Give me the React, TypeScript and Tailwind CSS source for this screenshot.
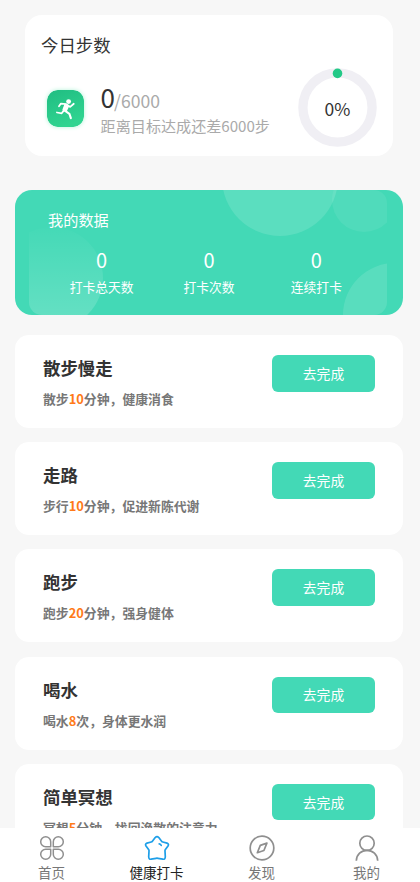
import React from "react";

const tasks = [
  { title: "散步慢走", before: "散步", n: "10", after: "分钟，健康消食" },
  { title: "走路", before: "步行", n: "10", after: "分钟，促进新陈代谢" },
  { title: "跑步", before: "跑步", n: "20", after: "分钟，强身健体" },
  { title: "喝水", before: "喝水", n: "8", after: "次，身体更水润" },
  { title: "简单冥想", before: "冥想", n: "5", after: "分钟，找回涣散的注意力" },
];

const stats = ["打卡总天数", "打卡次数", "连续打卡"];

function Runner() {
  return (
    <svg viewBox="0 0 38 38" className="h-[37px] w-[37px] shrink-0 rounded-[11px] shadow-[0_0_4px_#b4f3d8]">
      <defs>
        <linearGradient id="runner" x1="0" y1="0" x2="0.4" y2="1">
          <stop offset="0" stopColor="#20bd82" />
          <stop offset="1" stopColor="#30d490" />
        </linearGradient>
      </defs>
      <rect width="38" height="38" rx="11" fill="url(#runner)" />
      <circle cx="22.2" cy="11.9" r="2.5" fill="#fff" />
      <g fill="none" stroke="#fff" strokeWidth="1.8" strokeLinecap="round" strokeLinejoin="round">
        <path d="M12.3 16.8L14.3 13.9L19.8 14.5L23.8 17.4L27.5 14.1" />
        <path d="M17.8 20.4L15.1 23.9L10.2 23.1" />
        <path d="M18 20.9L23 24.4L24.5 28.9" strokeWidth="2.2" />
        <path d="M18.7 15L16.7 20.3L19.4 21.6L21.9 16.5Z" fill="#fff" />
      </g>
    </svg>
  );
}

function HomeIcon() {
  return (
    <svg viewBox="0 0 26 26" className="h-[26px] w-[26px]" fill="none" stroke="#8f8f8f" strokeWidth="1.5" strokeLinejoin="round">
      <path d="M11.7 11.7V6.7A5 5 0 1 0 6.7 11.7ZM14.3 11.7V6.7A5 5 0 1 1 19.3 11.7ZM11.7 14.3V19.3A5 5 0 1 1 6.7 14.3ZM14.3 14.3V19.3A5 5 0 1 0 19.3 14.3Z" />
    </svg>
  );
}

function StarIcon() {
  return (
    <svg viewBox="0 0 26 26" className="h-[26px] w-[26px]" fill="none" stroke="#1e9fe8" strokeWidth="1.7" strokeLinejoin="round">
      <path d="M11.2 2.6Q13 .8 14.8 2.6L17.6 6.2Q18 6.8 18.8 7L23 8.1Q25.2 9 24 11L21.4 14.6Q20.9 15.3 21 16.1L21.3 21.8Q21.2 24.6 18.8 24.2L14 23.3Q13 23.1 12 23.3L7.2 24.2Q4.8 24.6 4.7 21.8L5 16.1Q5.1 15.3 4.6 14.6L2 11Q.8 9 3 8.1L7.2 7Q8 6.8 8.4 6.2Z" />
      <path d="M15.2 8.8Q16.8 8.9 17.2 10.4" strokeLinecap="round" />
    </svg>
  );
}

function CompassIcon() {
  return (
    <svg viewBox="0 0 26 26" className="h-[26px] w-[26px]" fill="none" stroke="#8f8f8f" strokeWidth="1.7" strokeLinejoin="round">
      <circle cx="13" cy="13" r="11.8" />
      <path d="M17.9 8.1L11.3 10.4L8.3 17.7L14.9 15.5Z" />
    </svg>
  );
}

function UserIcon() {
  return (
    <svg viewBox="0 0 26 26" className="h-[26px] w-[26px]" fill="none" stroke="#8f8f8f" strokeWidth="1.7">
      <circle cx="13" cy="8.2" r="7.2" />
      <path d="M2.3 25.7C2.6 19.5 7.2 15.4 13 15.4S23.4 19.5 23.7 25.7" />
    </svg>
  );
}

const tabs = [
  { label: "首页", Icon: HomeIcon },
  { label: "健康打卡", Icon: StarIcon, active: true },
  { label: "发现", Icon: CompassIcon },
  { label: "我的", Icon: UserIcon },
];

export default function App() {
  return (
    <div className="flex h-[882px] w-[420px] flex-col overflow-hidden bg-[#f7f7f7] font-['Noto_Sans_CJK_SC',sans-serif] text-[#333]">
      <main className="min-h-0 flex-1 overflow-hidden pt-[15px]">
        <section className="ml-[25px] h-[141px] w-[368px] rounded-[17px] bg-white pl-4 pr-4 pt-[18px]">
          <div className="flex justify-between">
            <div>
              <h1 className="text-[17.4px] leading-6">今日步数</h1>
              <div className="mt-[26px] flex items-start pl-[6px]">
                <div className="pt-[7px]"><Runner /></div>
                <div className="ml-[16.6px]">
                  <div className="flex h-[28px] items-baseline leading-7">
                    <span className="text-[26px] leading-7 tracking-[-1px]">0</span>
                    <span className="text-[17.6px] text-[#aaa]">/6000</span>
                  </div>
                  <p className="mt-[3px] whitespace-nowrap text-[15.1px] leading-[23px] text-[#aaa]">距离目标达成还差6000步</p>
                </div>
              </div>
            </div>
            <div className="mt-[35px] grid h-[79px] w-[79px] place-items-center">
              <svg viewBox="0 0 79 79" className="col-start-1 row-start-1 h-[79px] w-[79px]">
                <circle cx="39.5" cy="39.5" r="34.6" fill="none" stroke="#f0eff4" strokeWidth="9.3" />
                <circle cx="39.5" cy="5.4" r="4.8" fill="#23c987" />
              </svg>
              <span className="col-start-1 row-start-1 pt-[2px] text-[17.5px] leading-6">0%</span>
            </div>
          </div>
        </section>

        <section className="relative ml-[15px] mt-[34px] h-[125px] w-[388px] overflow-hidden rounded-[17px] bg-[#43d9b6] text-white">
          <svg viewBox="0 0 388 125" className="absolute inset-0 h-[125px] w-[388px]">
            <defs>
              <linearGradient id="bubble" x1="0" y1="0" x2="0" y2="1">
                <stop offset="0" stopColor="#fff" stopOpacity=".01" />
                <stop offset="1" stopColor="#fff" stopOpacity=".2" />
              </linearGradient>
              <clipPath id="artwork"><rect x="14" y="0" width="358" height="125" rx="13" /></clipPath>
            </defs>
            <g clipPath="url(#artwork)">
              <circle cx="37" cy="88" r="51" fill="url(#bubble)" />
              <circle cx="265" cy="-12" r="58" fill="#fff" fillOpacity=".13" />
              <circle cx="349" cy="10" r="32" fill="#fff" fillOpacity=".07" />
              <circle cx="380" cy="125" r="52" fill="#fff" fillOpacity=".12" />
            </g>
          </svg>
          <div className="relative pt-[17px]">
            <h2 className="pl-[33px] text-[15.2px] leading-6">我的数据</h2>
            <div className="mt-[15px] grid grid-cols-3 px-[33px]">
              {stats.map((label) => (
                <div key={label} className="text-center">
                  <div className="text-[20px] leading-7">0</div>
                  <div className="mt-[3px] text-[12.8px] leading-5">{label}</div>
                </div>
              ))}
            </div>
          </div>
        </section>

        <div className="ml-[15px] mt-5 flex w-[388px] flex-col gap-[14.2px]">
          {tasks.map((t) => (
            <section key={t.title} className="flex h-[93px] shrink-0 justify-between rounded-[14px] bg-white pl-7 pr-7">
              <div className="pt-5">
                <h3 className="text-[17.4px] font-bold leading-[26px]">{t.title}</h3>
                <p className="mt-2 whitespace-nowrap text-[12.85px] font-bold leading-5 text-[#777]">
                  {t.before}<span className="text-[#ff7a18]">{t.n}</span>{t.after}
                </p>
              </div>
              <button className="mt-5 flex h-[36.5px] w-[103px] items-center justify-center rounded-[6px] bg-[#43d9b6] text-[13.8px] text-white">去完成</button>
            </section>
          ))}
        </div>
      </main>
      <nav className="-ml-px grid h-[54px] shrink-0 grid-cols-4 bg-white pr-px">
        {tabs.map(({ label, Icon, active }) => (
          <div key={label} className={`flex flex-col items-center pt-[7px] text-[13.5px] leading-5 ${active ? "text-[#222]" : "text-[#777]"}`}>
            <Icon />
            <span className="mt-px">{label}</span>
          </div>
        ))}
      </nav>
    </div>
  );
}
